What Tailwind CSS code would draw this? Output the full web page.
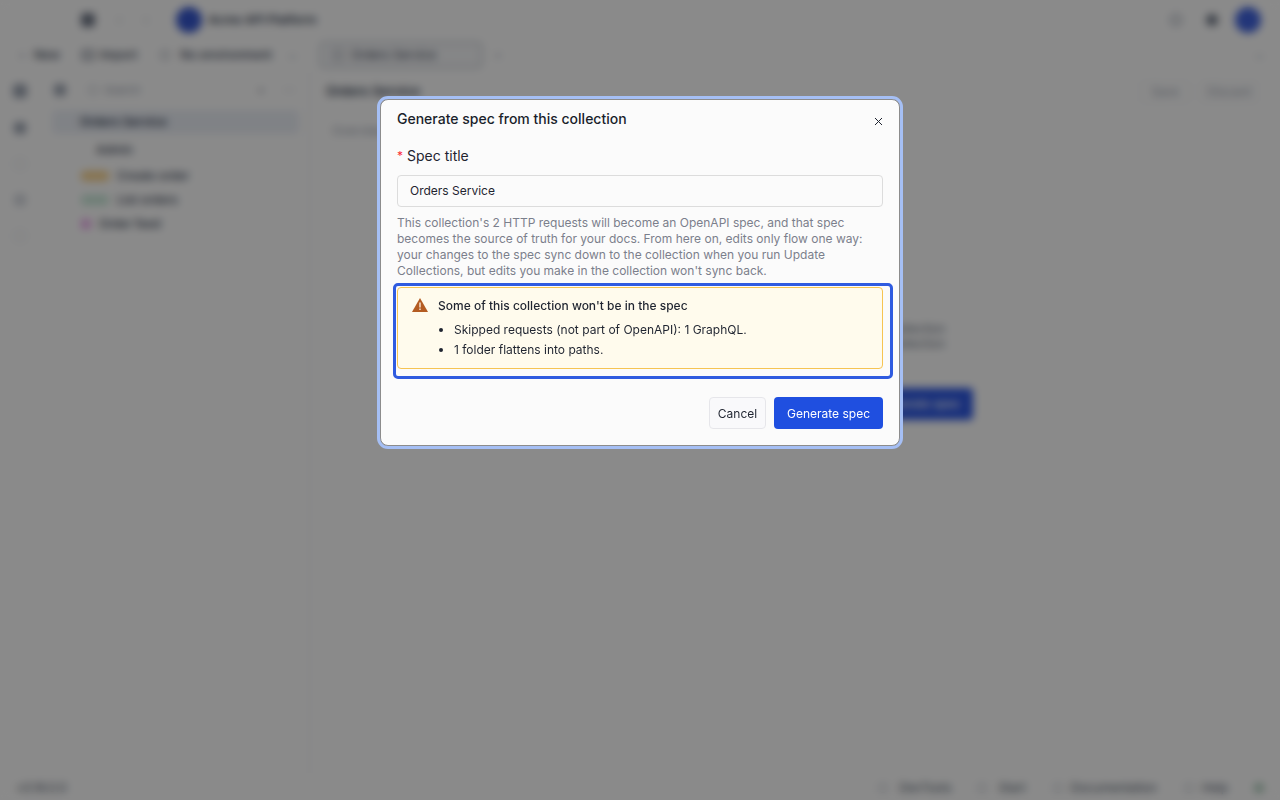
<!doctype html>
<html>

<head>
    <meta charset="UTF-8">
    <title>Generate spec</title>
    <script src="https://cdn.jsdelivr.net/npm/@tailwindcss/browser@4"></script>
</head>

<body class="font-['Inter','Noto_Sans',sans-serif] text-[#1f2430] bg-[#fcfcfc] overflow-hidden">
    <div class="h-[800px] w-[1280px] flex flex-col">
        <!-- top bar -->
        <header class="h-10 flex items-center pl-[81px] pr-[19px] shrink-0">
            <span class="w-3.5 h-3.5 bg-gray-500 rounded-sm"></span>
            <span class="ml-[22px] text-gray-400 text-xs">‹</span>
            <span class="ml-[22px] text-gray-400 text-xs">›</span>
            <span class="ml-[28px] w-[26px] h-[26px] rounded-full bg-[#3556cc]"></span>
            <span class="ml-1.5 text-xs font-semibold text-gray-700">Acme API Platform</span>
            <span class="ml-auto w-3 h-3 rounded-full border-2 border-gray-400"></span>
            <span class="ml-[24px] w-3 h-3 rounded-full bg-gray-500"></span>
            <span class="ml-[17px] w-[26px] h-[26px] rounded-full bg-[#3f62dc]"></span>
        </header>
        <!-- toolbar + tab strip -->
        <div class="h-[30px] flex shrink-0 text-xs text-gray-700">
            <div class="w-[320px] flex items-center pl-[18px]">
                <span class="text-gray-400">+</span><span class="ml-2 font-medium">New</span>
                <span class="ml-[22px] w-3 h-2.5 border-2 border-gray-500"></span><span class="ml-[6px] font-medium">Import</span>
                <span class="ml-[23px] w-2.5 h-2.5 border border-gray-500 rounded-full"></span><span class="ml-[10px] font-medium">No environment</span>
                <span class="ml-[16px] text-gray-400">⌄</span>
            </div>
            <div class="flex-1 flex items-center pr-4">
                <div class="w-[162px] h-[26px] flex items-center gap-2 px-3 border border-gray-400 rounded bg-gray-100">
                    <span class="w-2.5 h-2.5 border border-gray-500"></span><span>Orders Service</span>
                </div>
                <span class="ml-3 text-gray-400">+</span>
                <span class="ml-auto text-gray-400">⌄</span>
            </div>
        </div>
        <!-- body -->
        <div class="flex-1 flex min-h-0">
            <nav class="w-10 flex flex-col items-center pt-3.5 gap-6 shrink-0">
                <span class="w-3.5 h-3.5 bg-gray-400 rounded-sm"></span>
                <span class="w-3 h-3 bg-gray-400 rounded-sm"></span>
                <span class="w-3 h-3 border border-gray-300 rounded-sm"></span>
                <span class="w-3 h-3 bg-gray-300 rounded-sm"></span>
                <span class="w-3 h-3 border border-gray-300 rounded-sm"></span>
            </nav>
            <aside class="w-[270px] border-r border-gray-200 pl-3 pr-2.5 shrink-0 text-xs text-gray-700">
                <div class="h-10 flex items-center">
                    <span class="w-3 h-3 bg-gray-400 rounded-sm ml-0.5"></span>
                    <span class="ml-[22px] w-2.5 h-2.5 border border-gray-400 rounded-full"></span>
                    <span class="ml-1.5 text-gray-400 text-[11px]">Search</span>
                    <span class="ml-auto mr-[18px] text-gray-500">+</span>
                    <span class="mr-[4px] text-gray-400">⋯</span>
                </div>
                <div class="h-6 flex items-center pl-7 bg-[#e9edf4] rounded font-semibold">Orders Service</div>
                <div class="mt-1 h-6 flex items-center pl-[44px] font-medium">Admin</div>
                <div class="mt-[2px] h-6 flex items-center pl-[29px]"><span class="w-7 h-2.5 rounded-sm bg-[#f5d08a]"></span><span class="ml-2 font-medium">Create order</span></div>
                <div class="h-6 flex items-center pl-[29px]"><span class="w-7 h-2.5 rounded-sm bg-[#c6e6d6]"></span><span class="ml-2 font-medium">List orders</span></div>
                <div class="h-6 flex items-center pl-[29px]"><span class="w-2.5 h-2.5 rounded-sm bg-[#e9a3e9]"></span><span class="ml-2 font-medium">Order feed</span></div>
            </aside>
            <main class="flex-1 min-w-0 text-xs text-gray-600">
                <div class="h-[43px] flex items-center pl-4 pr-[22px]">
                    <span class="text-[13px] font-semibold text-gray-700">Orders Service</span>
                    <span class="ml-auto h-[22px] w-[50px] flex items-center justify-center border border-gray-200 rounded text-gray-400">Save</span>
                    <span class="ml-2.5 h-[22px] w-[58px] flex items-center justify-center border border-gray-200 rounded text-gray-400">Discard</span>
                </div>
                <div class="pl-[22px] pt-[10px] text-gray-400">Overview</div>
                <div class="mt-[182px] w-[635px] text-right text-gray-500 leading-[15px]">
                    <p>from this collection</p>
                    <p>and this collection</p>
                </div>
                <div class="mt-[37px] ml-[500px] w-[163px] h-8 flex items-center justify-end pr-3 rounded bg-[#2a55e0] text-white font-medium">Generate spec</div>
            </main>
        </div>
        <footer class="h-6 shrink-0 flex items-center pl-[17px] pr-4 text-xs text-gray-600">
            <span>v3.18.0.0</span>
            <span class="ml-auto w-2.5 h-2.5 border border-gray-400 rounded-full"></span><span class="ml-[11px]">DevTools</span>
            <span class="ml-[25px] w-2.5 h-2.5 border border-gray-400 rounded-full"></span><span class="ml-3">Start</span>
            <span class="ml-[27px] w-2.5 h-2.5 border border-gray-400 rounded-full"></span><span class="ml-2">Documentation</span>
            <span class="ml-[27px] w-2.5 h-2.5 border border-gray-400 rounded-full"></span><span class="ml-2">Help</span>
            <span class="ml-[26px] w-2.5 h-2.5 rounded-full bg-[#a6c7b4]"></span>
        </footer>
    </div>

    <!-- modal -->
    <div class="fixed inset-0 z-10 bg-black/45 backdrop-blur-[4px]">
        <div class="mx-auto mt-[99px] w-[520px] h-[347px] bg-[#fbfbfb] rounded-lg border border-[#8c8c8c] outline-3 outline-[#a5bff5] flex flex-col pl-[16px] pr-[16px]">
            <div class="h-[38px] flex items-center justify-between shrink-0">
                <h2 class="text-sm font-medium text-[#1a1f2b]">Generate spec from this collection</h2>
                <svg class="w-[9px] h-[9px] mt-[5px]" viewBox="0 0 9 9" fill="none" stroke="#1f2430" stroke-width="1"><path d="M1 1l7 7M8 1l-7 7" /></svg>
            </div>
            <label class="mt-[8px] h-[20px] flex items-center text-sm text-[#1f2430]"><span class="text-red-500 text-xs mr-1">*</span>Spec title</label>
            <input class="mt-[9px] h-8 w-full px-3 pb-[2px] border border-[#dcdcdc] rounded text-xs text-[#1f2430] bg-[#fbfbfb] outline-none" value="Orders Service">
            <p class="mt-2 text-xs leading-4 text-[#7b7f8c]">This collection's 2 HTTP requests will become an OpenAPI spec, and that spec becomes the source of truth for your docs. From here on, edits only flow one way: your changes to the spec sync down to the collection when you run Update Collections, but edits you make in the collection won't sync back.</p>
            <div class="mt-[7px] -ml-px -mr-[7px] pl-px pr-[7px] pt-px pb-[7px] outline-3 outline-[#2f5be0] rounded-[2px]">
                <div class="h-[82px] border border-[#f6c453] bg-[#fffbed] rounded flex pl-[14px] pt-[10px] text-xs text-[#1f2430]">
                    <svg class="w-4 h-4 shrink-0 mt-[-1px]" viewBox="0 0 16 16"><path d="M8 1L16 15H0z" fill="#b45c22" /><path d="M8 5.5v5M8 11.5v1.6" stroke="#fdeadb" stroke-width="1.4" /></svg>
                    <div class="ml-[10px]">
                        <div class="font-medium leading-4">Some of this collection won't be in the spec</div>
                        <ul class="list-disc pl-4 mt-[8px] leading-4 space-y-1">
                            <li>Skipped requests (not part of OpenAPI): 1 GraphQL.</li>
                            <li>1 folder flattens into paths.</li>
                        </ul>
                    </div>
                </div>
            </div>
            <div class="mt-auto mb-4 flex justify-end gap-2 text-xs">
                <button class="h-8 w-[57px] pt-px border border-[#e6e6ea] rounded bg-[#f9f9fb] text-[#1f2430]">Cancel</button>
                <button class="h-8 w-[109px] pt-px rounded bg-[#1f4fe0] text-white">Generate spec</button>
            </div>
        </div>
    </div>
</body>

</html>
